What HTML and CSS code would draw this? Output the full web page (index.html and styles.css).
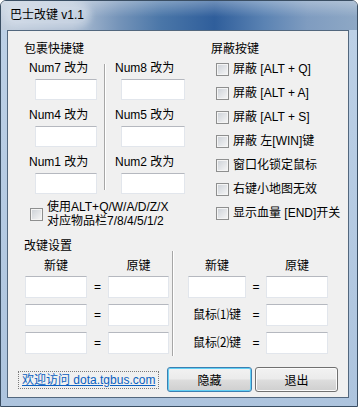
FILE: index.html
```html
<!DOCTYPE html>
<html lang="zh-CN">
<head>
  <meta charset="UTF-8">
  <title>巴士改键 v1.1</title>
  <link rel="stylesheet" href="styles.css">
</head>
<body>
  <div class="window">
    <div class="titlebar"><span class="title">巴士改键 v1.1</span></div>
    <div class="frame">
      <div class="client">

        <div class="top">
          <section class="pack">
            <div class="heading">包裹快捷键</div>
            <div class="numgrid">
              <div class="numcol">
                <div class="cell"><div class="lbl">Num7 改为</div><input type="text" class="edit"></div>
                <div class="cell"><div class="lbl">Num4 改为</div><input type="text" class="edit"></div>
                <div class="cell"><div class="lbl">Num1 改为</div><input type="text" class="edit"></div>
              </div>
              <div class="vline"></div>
              <div class="numcol second">
                <div class="cell"><div class="lbl">Num8 改为</div><input type="text" class="edit"></div>
                <div class="cell"><div class="lbl">Num5 改为</div><input type="text" class="edit"></div>
                <div class="cell"><div class="lbl">Num2 改为</div><input type="text" class="edit"></div>
              </div>
            </div>
            <label class="check two">
              <span class="box"></span>
              <span>使用ALT+Q/W/A/D/Z/X<br>对应物品栏7/8/4/5/1/2</span>
            </label>
          </section>

          <section class="block">
            <div class="heading">屏蔽按键</div>
            <label class="check"><span class="box"></span><span>屏蔽 [ALT + Q]</span></label>
            <label class="check"><span class="box"></span><span>屏蔽 [ALT + A]</span></label>
            <label class="check"><span class="box"></span><span>屏蔽 [ALT + S]</span></label>
            <label class="check"><span class="box"></span><span>屏蔽 左[WIN]键</span></label>
            <label class="check"><span class="box"></span><span>窗口化锁定鼠标</span></label>
            <label class="check"><span class="box"></span><span>右键小地图无效</span></label>
            <label class="check"><span class="box"></span><span>显示血量 [END]开关</span></label>
          </section>
        </div>

        <section class="remap">
          <div class="heading">改键设置</div>
          <div class="remap-body">
            <div class="rgrid">
              <div class="hd">新键</div><div></div><div class="hd">原键</div>
              <input type="text" class="edit"><div class="eq">=</div><input type="text" class="edit">
              <input type="text" class="edit"><div class="eq">=</div><input type="text" class="edit">
              <input type="text" class="edit"><div class="eq">=</div><input type="text" class="edit">
            </div>
            <div class="vline tall"></div>
            <div class="rgrid mouse">
              <div class="hd">新键</div><div></div><div class="hd">原键</div>
              <input type="text" class="edit"><div class="eq">=</div><input type="text" class="edit">
              <div class="mlbl">鼠标⑴键</div><div class="eq">=</div><input type="text" class="edit">
              <div class="mlbl">鼠标⑵键</div><div class="eq">=</div><input type="text" class="edit">
            </div>
          </div>
        </section>

        <div class="footer">
          <a class="link" href="#">欢迎访问 dota.tgbus.com</a>
          <div class="buttons">
            <button class="btn default">隐藏</button>
            <button class="btn">退出</button>
          </div>
        </div>

      </div>
    </div>
  </div>
</body>
</html>
```

FILE: styles.css
```css
* {
  box-sizing: border-box;
}
body {
  margin: 0;
  background: #fff;
  color: #000;
  font-family: "Liberation Sans", "Noto Sans CJK SC", sans-serif;
  font-size: 12px;
}

/* window frame */
.window {
  width: 358px;
  height: 407px;
  border: 1px solid #3a4e63;
  border-radius: 6px 6px 0 0;
  display: flex;
  flex-direction: column;
  overflow: hidden;
}
.titlebar {
  height: 29px;
  flex: none;
  padding-left: 6px;
  display: flex;
  align-items: center;
  background:
    linear-gradient(rgba(255,255,255,0.3), rgba(255,255,255,0) 55%),
    linear-gradient(90deg, #c2cedd 0%, #b0c0d4 20%, #7594b9 33%, #4a76a8 45%, #2f5e9b 60%, #5b83b3 74%, #7f9cc0 86%, #8ea8c5 100%);
}
.title {
  font-size: 12px;
  line-height: 16px;
  padding: 0 3px;
  margin-top: -2px;
  background: rgba(226, 233, 242, 0.45);
  box-shadow: 0 0 6px 4px rgba(226, 233, 242, 0.45);
  border-radius: 8px;
}
.frame {
  flex: 1;
  display: flex;
  padding: 0 8px 8px 6px;
  background: linear-gradient(#bcd0e6, #adc4de);
}
.client {
  flex: 1;
  border: 1px solid #52677e;
  background: #f0f0f0;
  display: flex;
  flex-direction: column;
  padding: 11px 0 5px 0;
  overflow: hidden;
}

.heading {
  line-height: 14px;
  height: 14px;
  white-space: nowrap;
}

/* edit boxes */
.edit {
  display: block;
  margin: 0;
  padding: 0 2px;
  height: 21px;
  background: #fff;
  border: 1px solid #e2e6ec;
  border-top-color: #b5b8bf;
  font: inherit;
}

/* check boxes */
.check {
  display: flex;
  align-items: center;
  gap: 4px;
  line-height: 14px;
  white-space: nowrap;
}
.box {
  flex: none;
  width: 13px;
  height: 13px;
  border: 1px solid #8e8f8f;
  background: linear-gradient(135deg, #cbd0d6, #f7f7f7);
  box-shadow: inset 0 0 0 1px #f4f4f4;
}

/* etched separator */
.vline {
  width: 2px;
  border-left: 1px solid #a6a6a6;
  border-right: 1px solid #fff;
  margin: 3px 0 4px 0;
}

/* top part */
.top {
  display: flex;
  margin-left: 16px;
}
.pack {
  width: 187px;
  flex: none;
}
.numgrid {
  display: flex;
  margin-top: 5px;
}
.numcol {
  width: 80px;
  display: flex;
  flex-direction: column;
  gap: 8px;
}
.lbl {
  line-height: 14px;
  padding-left: 5px;
  white-space: nowrap;
}
.cell .edit {
  margin: 4px 0 0 11px;
  width: 62px;
}
.numcol.second {
  width: 85px;
}
.second .lbl {
  padding-left: 9px;
}
.second .edit {
  margin-left: 15px;
  width: 64px;
}
.check.two {
  margin: 6px 0 0 6px;
  line-height: 14px;
}

.block {
  flex: 1;
  overflow: hidden;
}
.block .heading {
  margin-bottom: -4px;
}
.block .check {
  margin: 10px 0 0 5px;
}

/* key remap */
.remap {
  margin: 11px 0 0 16px;
}
.remap-body {
  display: flex;
  align-items: flex-start;
  margin-top: 6px;
}
.rgrid {
  display: grid;
  grid-template-columns: 62px 21px 61px;
  grid-template-rows: 11px 22px 22px 22px;
  row-gap: 6px;
  margin-left: 1px;
}
.rgrid .hd {
  text-align: center;
  line-height: 14px;
  height: 14px;
}
.rgrid .edit {
  height: 22px;
}
.eq {
  text-align: center;
  line-height: 22px;
}
.vline.tall {
  height: 105px;
  margin: -8px 14px 0 3px;
}
.rgrid.mouse {
  grid-template-columns: 58px 20px 62px;
  margin-left: 0;
}
.mlbl {
  line-height: 22px;
  padding-left: 5px;
  white-space: nowrap;
}

/* bottom bar */
.footer {
  margin-top: auto;
  display: flex;
  align-items: center;
  padding: 0 10px;
}
.link {
  color: #0a5fc0;
  text-decoration: underline;
  line-height: 14px;
  padding: 1px 3px;
  border: 1px dotted #7a7a7a;
  white-space: nowrap;
}
.buttons {
  margin-left: auto;
  display: flex;
  gap: 3px;
}
.btn {
  width: 83px;
  height: 25px;
  padding: 0;
  font: inherit;
  color: #000;
  border: 1px solid #707070;
  border-radius: 3px;
  background: linear-gradient(#f2f2f2 0%, #ebebeb 48%, #dddddd 52%, #cfcfcf 100%);
  box-shadow: inset 0 0 0 1px #fbfbfb;
}
.btn.default {
  width: 85px;
  border-color: #3c7fb1;
  box-shadow: inset 0 0 0 1px #62d0f5;
}
```
